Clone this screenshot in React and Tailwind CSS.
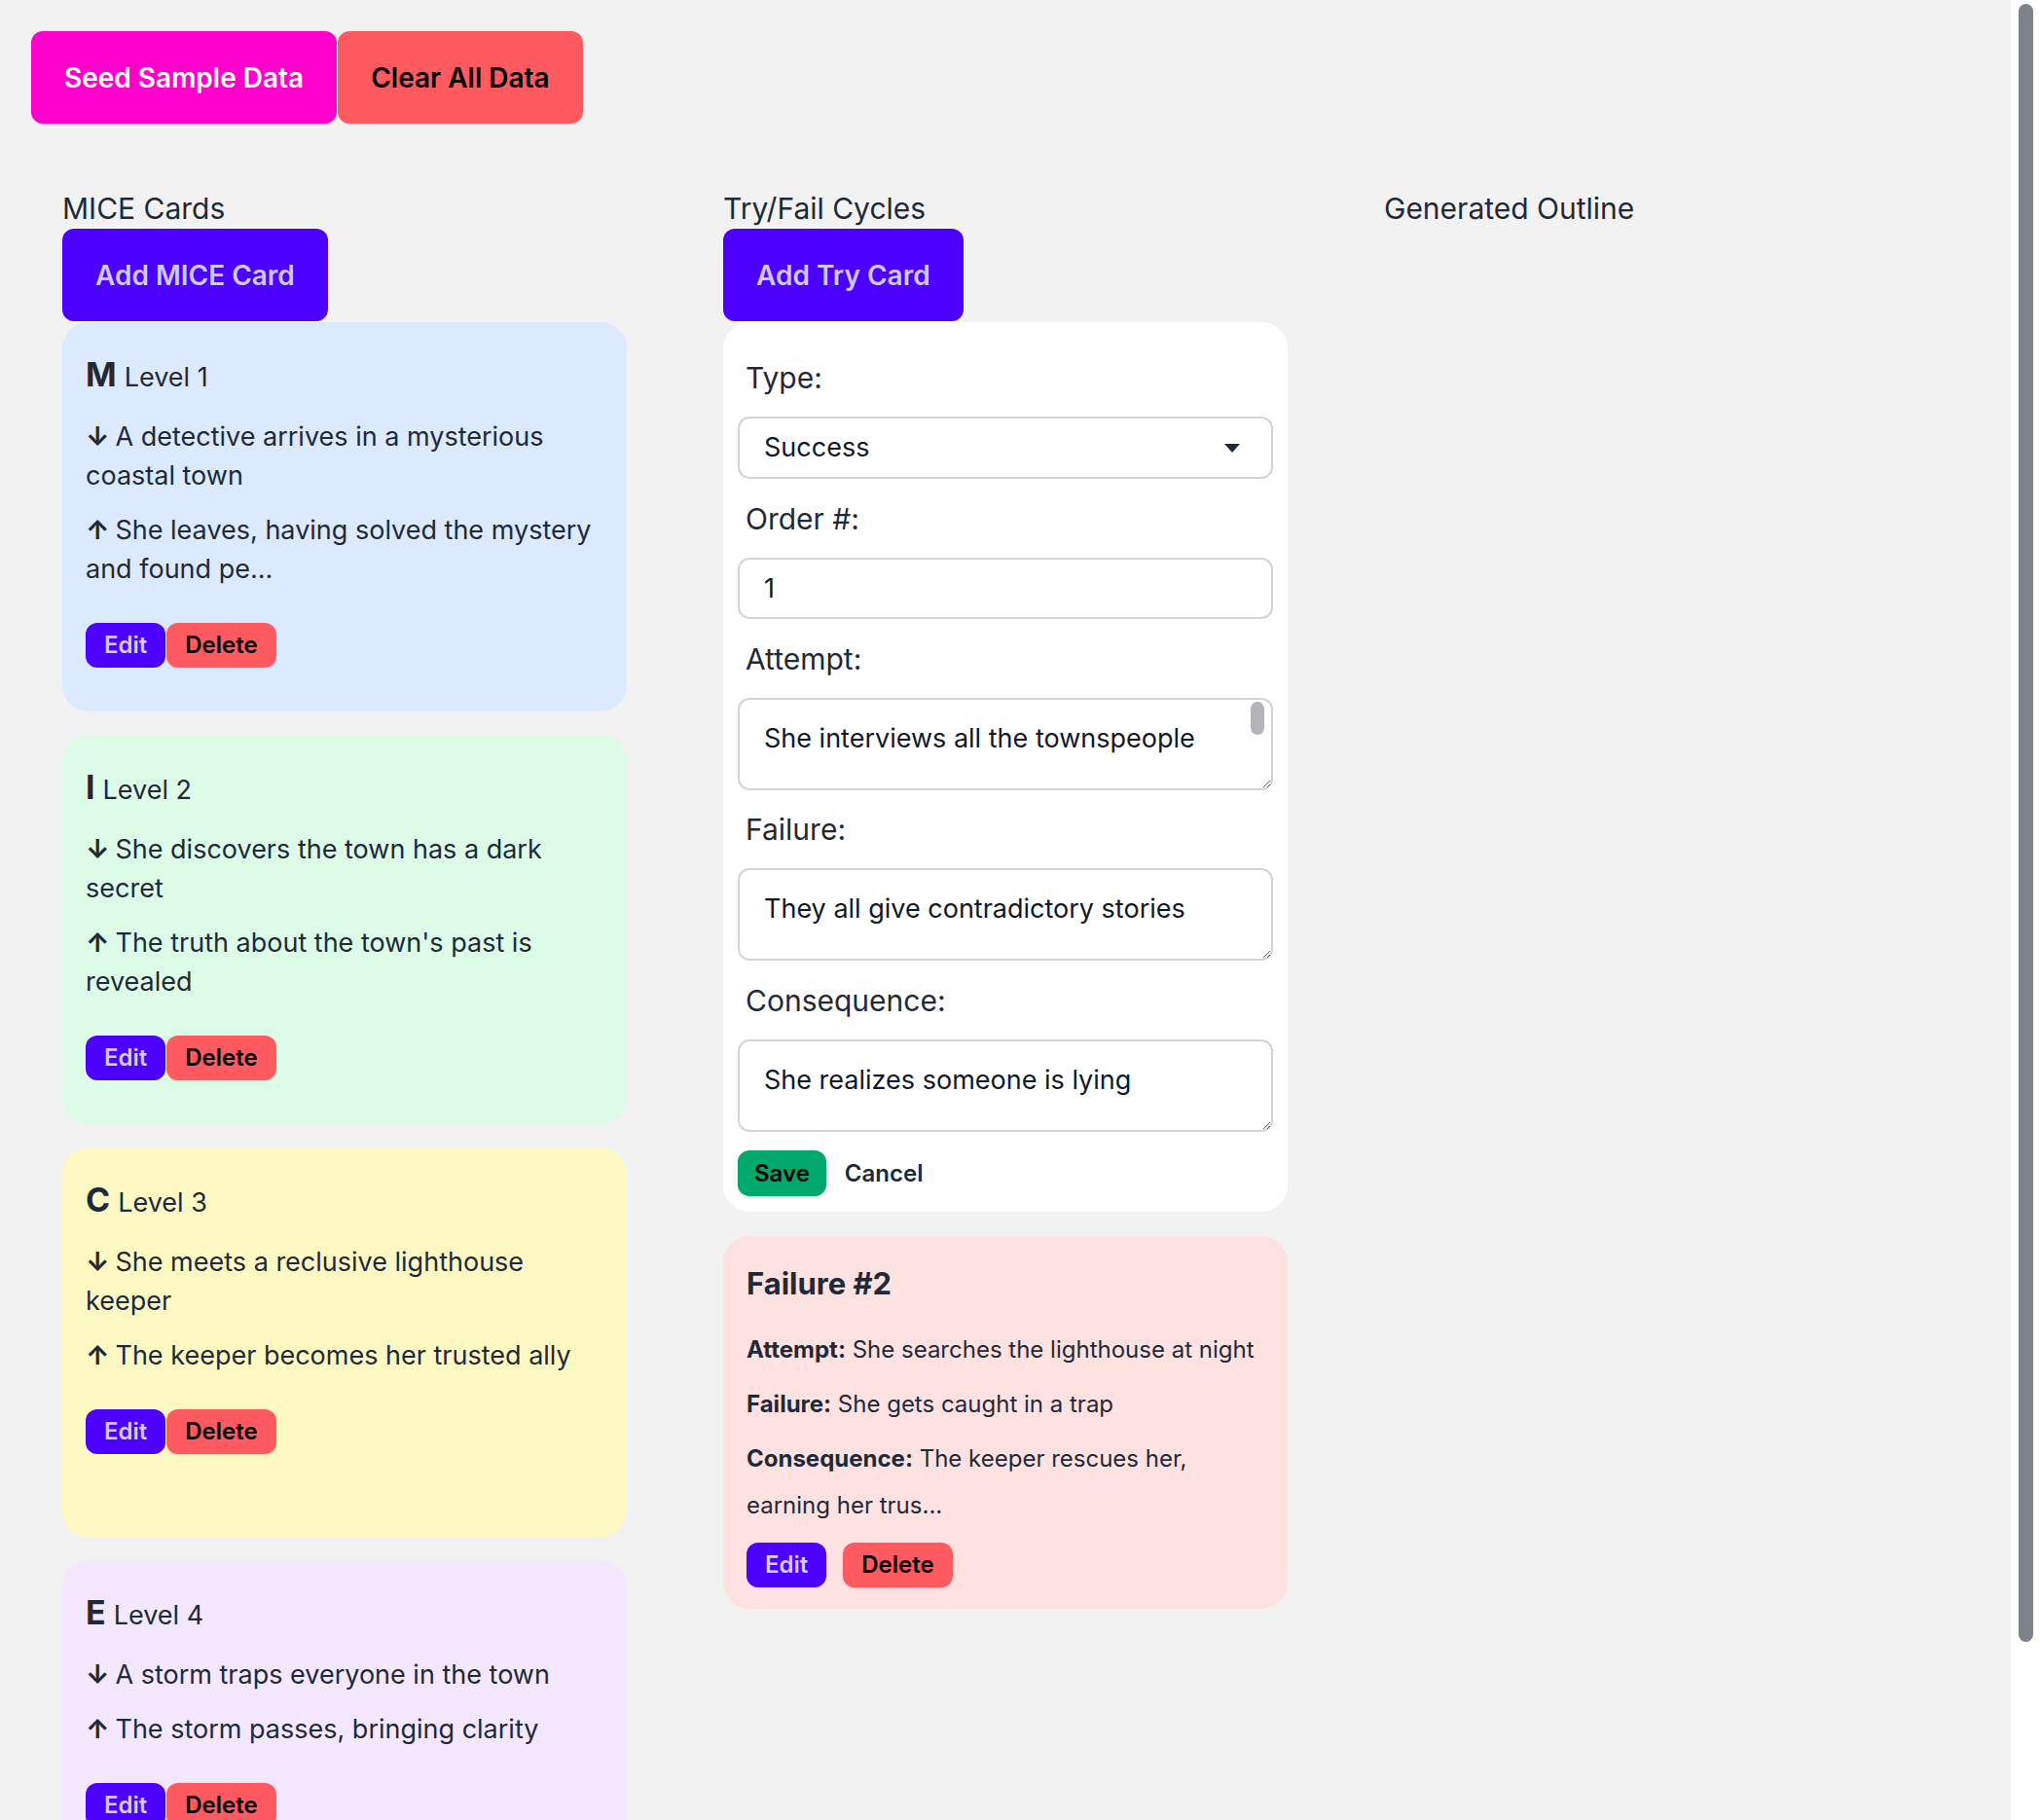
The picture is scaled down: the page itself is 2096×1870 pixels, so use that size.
import React from "react";

const miceCards = [
  {
    letter: "M",
    level: 1,
    bg: "bg-[#dbeafe]",
    down: ["A detective arrives in a mysterious", "coastal town"],
    up: ["She leaves, having solved the mystery", "and found pe..."],
  },
  {
    letter: "I",
    level: 2,
    bg: "bg-[#dcfce7]",
    down: ["She discovers the town has a dark", "secret"],
    up: ["The truth about the town's past is", "revealed"],
  },
  {
    letter: "C",
    level: 3,
    bg: "bg-[#fef9c3]",
    down: ["She meets a reclusive lighthouse", "keeper"],
    up: ["The keeper becomes her trusted ally"],
  },
  {
    letter: "E",
    level: 4,
    bg: "bg-[#f3e8ff]",
    down: ["A storm traps everyone in the town"],
    up: ["The storm passes, bringing clarity"],
  },
];

function Lines({ arrow, lines }) {
  return (
    <div className="text-[27px] leading-[40px]">
      {lines.map((l, i) => (
        <div key={i} className="whitespace-nowrap">
          {i === 0 && <span className="mr-[6px] font-bold">{arrow}</span>}
          {l}
        </div>
      ))}
    </div>
  );
}

function SmallButtons({ gap }) {
  return (
    <div className={gap ? "flex gap-[17px]" : "flex gap-[1px]"}>
      <button className="h-[46px] px-[19px] rounded-[12px] bg-[#4c00ff] text-[#d4ccff] text-[24px] font-semibold">
        Edit
      </button>
      <button className="h-[46px] px-[19px] rounded-[12px] bg-[#ff5a5f] text-black text-[24px] font-semibold shadow-sm">
        Delete
      </button>
    </div>
  );
}

function MiceCard({ card }) {
  return (
    <div className={`${card.bg} rounded-[27px] px-[24px] pt-[32px] pb-[45px] min-h-[400px] mb-[24px]`}>
      <div className="flex items-baseline leading-[44px]">
        <span className="text-[34px] font-bold">{card.letter}</span>
        <span className="text-[27px] ml-[8px]">Level {card.level}</span>
      </div>
      <div className="mt-[19px]">
        <Lines arrow="↓" lines={card.down} />
      </div>
      <div className="mt-[16px]">
        <Lines arrow="↑" lines={card.up} />
      </div>
      <div className="mt-[35px]">
        <SmallButtons />
      </div>
    </div>
  );
}

function BigButton({ children, className }) {
  return (
    <button className={`h-[95px] px-[34px] rounded-[12px] text-[28px] font-semibold ${className}`}>
      {children}
    </button>
  );
}

function Label({ children }) {
  return <div className="ml-[8px] text-[30px] leading-[40px]">{children}</div>;
}

const field =
  "w-full border-2 border-[#d4d4d8] rounded-[12px] bg-white text-[27px] text-[#111827] outline-none";

export default function App() {
  return (
    <div className="flex h-[1870px] overflow-hidden bg-[#f2f2f2] text-[#1f2937] font-['Inter',sans-serif]">
      <div className="flex-1 min-w-0 p-[32px]">
        <div className="flex gap-[1px]">
          <BigButton className="bg-[#ff00cc] text-white">Seed Sample Data</BigButton>
          <BigButton className="bg-[#ff5a5f] text-black">Clear All Data</BigButton>
        </div>

        <div className="mt-[68px] px-[32px] grid grid-cols-3 gap-x-[99px]">
          {/* MICE column */}
          <div>
            <h2 className="text-[30px] leading-[38px]">MICE Cards</h2>
            <BigButton className="mt-[2px] bg-[#4c00ff] text-[#cfc8ff]">Add MICE Card</BigButton>
            <div className="mt-[1px]">
              {miceCards.map((c) => (
                <MiceCard key={c.letter} card={c} />
              ))}
            </div>
          </div>

          {/* Try/Fail column */}
          <div>
            <h2 className="text-[30px] leading-[38px]">Try/Fail Cycles</h2>
            <BigButton className="mt-[2px] bg-[#4c00ff] text-[#cfc8ff]">Add Try Card</BigButton>

            <div className="mt-[1px] bg-white rounded-[27px] px-[15px] pt-[37px] pb-[16px]">
              <Label>Type:</Label>
              <div className="relative mt-[20px]">
                <select className={`${field} h-[64px] pl-[25px] appearance-none`} defaultValue="Success">
                  <option>Success</option>
                  <option>Failure</option>
                </select>
                <svg className="absolute right-[34px] top-[28px]" width="16" height="9" viewBox="0 0 16 9">
                  <path d="M0 0h16L8 9z" fill="#1f2937" />
                </svg>
              </div>

              <div className="mt-[21px]">
                <Label>Order #:</Label>
              </div>
              <input className={`${field} mt-[20px] h-[63px] pl-[25px]`} defaultValue="1" />

              <div className="mt-[21px]">
                <Label>Attempt:</Label>
              </div>
              <div className="relative mt-[20px]">
                <textarea
                  className={`${field} block h-[95px] pl-[25px] pt-[20px] leading-[40px] resize-y`}
                  defaultValue="She interviews all the townspeople"
                />
                <div className="absolute right-[9px] top-[4px] w-[14px] h-[34px] rounded-full bg-[#b3b5b9]" />
              </div>

              <div className="mt-[20px]">
                <Label>Failure:</Label>
              </div>
              <textarea
                className={`${field} block mt-[20px] h-[95px] pl-[25px] pt-[20px] leading-[40px] resize-y`}
                defaultValue="They all give contradictory stories"
              />

              <div className="mt-[21px]">
                <Label>Consequence:</Label>
              </div>
              <textarea
                className={`${field} block mt-[20px] h-[95px] pl-[25px] pt-[20px] leading-[40px] resize-y`}
                defaultValue="She realizes someone is lying"
              />

              <div className="mt-[19px] flex items-center gap-[19px]">
                <button className="h-[47px] px-[17px] rounded-[12px] bg-[#00a86b] text-black text-[24px] font-semibold shadow-sm">
                  Save
                </button>
                <button className="text-[24px] font-semibold text-[#1f2937]">Cancel</button>
              </div>
            </div>

            <div className="mt-[25px] bg-[#fee2e2] rounded-[27px] px-[24px] pt-[25px] pb-[22px]">
              <h3 className="text-[31px] font-bold leading-[48px]">Failure #2</h3>
              <div className="mt-[20px] text-[24px] leading-[48px]">
                <p className="mb-[8px] whitespace-nowrap">
                  <b className="font-bold">Attempt:</b> She searches the lighthouse at night
                </p>
                <p className="mb-[8px] whitespace-nowrap">
                  <b className="font-bold">Failure:</b> She gets caught in a trap
                </p>
                <p>
                  <b className="font-bold">Consequence:</b> The keeper rescues her,
                  <br />
                  earning her trus...
                </p>
              </div>
              <div className="mt-[14px]">
                <SmallButtons gap />
              </div>
            </div>
          </div>

          {/* Outline column */}
          <div>
            <h2 className="text-[30px] leading-[38px]">Generated Outline</h2>
          </div>
        </div>
      </div>

      <div className="w-[30px] shrink-0 bg-white flex justify-center pt-[4px]">
        <div className="w-[15px] h-[1683px] rounded-full bg-[#7c818a]" />
      </div>
    </div>
  );
}
